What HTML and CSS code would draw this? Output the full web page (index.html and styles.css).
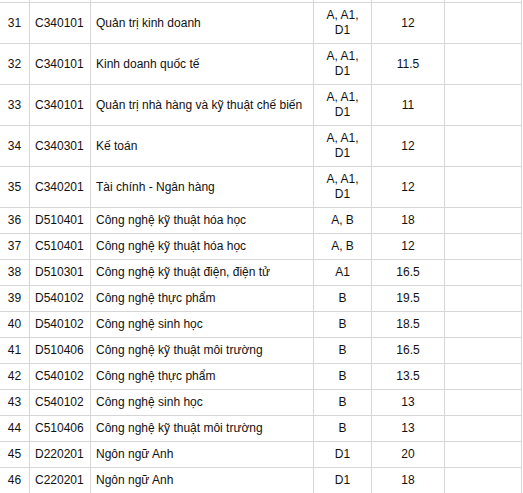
FILE: index.html
```html
<!DOCTYPE html>
<html lang="vi">
<head>
<meta charset="utf-8">
<title>Bảng điểm chuẩn</title>
<link rel="stylesheet" href="styles.css">
</head>
<body>
<div class="table">
  <div class="row stub"><div class="cell"></div><div class="cell"></div><div class="cell"></div><div class="cell"></div><div class="cell"></div><div class="cell"></div></div>
  <div class="row"><div class="cell c">31</div><div class="cell">C340101</div><div class="cell">Quản trị kinh doanh</div><div class="cell c">A, A1, D1</div><div class="cell c">12</div><div class="cell"></div></div>
  <div class="row"><div class="cell c">32</div><div class="cell">C340101</div><div class="cell">Kinh doanh quốc tế</div><div class="cell c">A, A1, D1</div><div class="cell c">11.5</div><div class="cell"></div></div>
  <div class="row"><div class="cell c">33</div><div class="cell">C340101</div><div class="cell">Quản trị nhà hàng và kỹ thuật chế biến</div><div class="cell c">A, A1, D1</div><div class="cell c">11</div><div class="cell"></div></div>
  <div class="row"><div class="cell c">34</div><div class="cell">C340301</div><div class="cell">Kế toán</div><div class="cell c">A, A1, D1</div><div class="cell c">12</div><div class="cell"></div></div>
  <div class="row"><div class="cell c">35</div><div class="cell">C340201</div><div class="cell">Tài chính - Ngân hàng</div><div class="cell c">A, A1, D1</div><div class="cell c">12</div><div class="cell"></div></div>
  <div class="row"><div class="cell c">36</div><div class="cell">D510401</div><div class="cell">Công nghệ kỹ thuật hóa học</div><div class="cell c">A, B</div><div class="cell c">18</div><div class="cell"></div></div>
  <div class="row"><div class="cell c">37</div><div class="cell">C510401</div><div class="cell">Công nghệ kỹ thuật hóa học</div><div class="cell c">A, B</div><div class="cell c">12</div><div class="cell"></div></div>
  <div class="row"><div class="cell c">38</div><div class="cell">D510301</div><div class="cell">Công nghệ kỹ thuật điện, điện tử</div><div class="cell c">A1</div><div class="cell c">16.5</div><div class="cell"></div></div>
  <div class="row"><div class="cell c">39</div><div class="cell">D540102</div><div class="cell">Công nghệ thực phẩm</div><div class="cell c">B</div><div class="cell c">19.5</div><div class="cell"></div></div>
  <div class="row"><div class="cell c">40</div><div class="cell">D540102</div><div class="cell">Công nghệ sinh học</div><div class="cell c">B</div><div class="cell c">18.5</div><div class="cell"></div></div>
  <div class="row"><div class="cell c">41</div><div class="cell">D510406</div><div class="cell">Công nghệ kỹ thuật môi trường</div><div class="cell c">B</div><div class="cell c">16.5</div><div class="cell"></div></div>
  <div class="row"><div class="cell c">42</div><div class="cell">C540102</div><div class="cell">Công nghệ thực phẩm</div><div class="cell c">B</div><div class="cell c">13.5</div><div class="cell"></div></div>
  <div class="row"><div class="cell c">43</div><div class="cell">C540102</div><div class="cell">Công nghệ sinh học</div><div class="cell c">B</div><div class="cell c">13</div><div class="cell"></div></div>
  <div class="row"><div class="cell c">44</div><div class="cell">C510406</div><div class="cell">Công nghệ kỹ thuật môi trường</div><div class="cell c">B</div><div class="cell c">13</div><div class="cell"></div></div>
  <div class="row"><div class="cell c">45</div><div class="cell">D220201</div><div class="cell">Ngôn ngữ Anh</div><div class="cell c">D1</div><div class="cell c">20</div><div class="cell"></div></div>
  <div class="row"><div class="cell c">46</div><div class="cell">C220201</div><div class="cell">Ngôn ngữ Anh</div><div class="cell c">D1</div><div class="cell c">18</div><div class="cell"></div></div>
</div>
</body>
</html>
```

FILE: styles.css
```css
html, body {
  margin: 0;
  padding: 0;
  background: #ffffff;
}
body {
  font-family: "Liberation Sans", Arial, sans-serif;
  font-size: 12px;
  line-height: 15px;
  color: #111111;
}
.table {
  width: 522px;
}
.row {
  display: grid;
  grid-template-columns: 30px 61px 223px 58px 73px 77px;
}
.cell {
  box-sizing: border-box;
  border-right: 1px solid #d6d6d6;
  border-bottom: 1px solid #d6d6d6;
  padding: 5px;
  display: flex;
  align-items: center;
  overflow: hidden;
}
.cell.c {
  justify-content: center;
  text-align: center;
}
.row.stub .cell {
  height: 3px;
  padding: 0;
}
```
